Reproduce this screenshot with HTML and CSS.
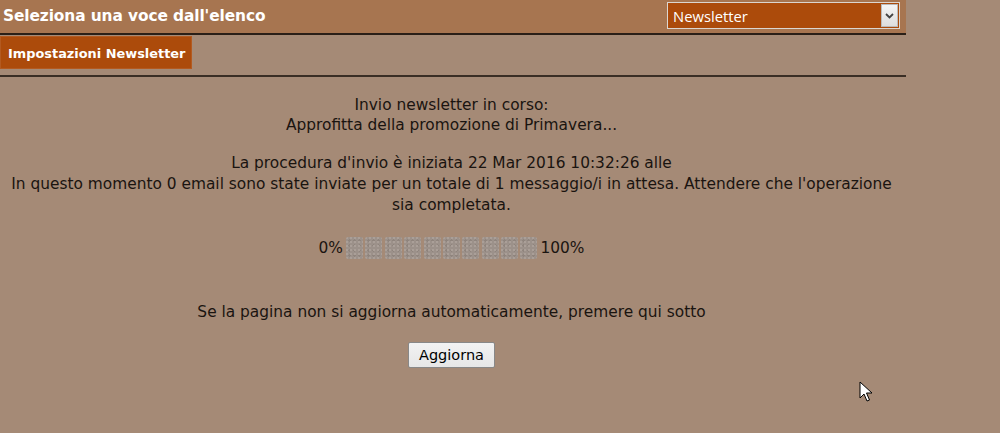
FILE: index.html
```
<!DOCTYPE html>
<html>
<head>
<meta charset="utf-8">
<link rel="stylesheet" href="styles.css">
</head>
<body>
<div class="page">
  <div class="header">
    <span class="title">Seleziona una voce dall'elenco</span>
    <div class="select">
      <span class="select-text">Newsletter</span>
      <span class="select-btn"><svg width="9" height="6" viewBox="0 0 9 6"><path d="M1 1 L4.5 4.5 L8 1" fill="none" stroke="#444" stroke-width="1.8"/></svg></span>
    </div>
  </div>
  <div class="tabs">
    <span class="tab">Impostazioni Newsletter</span>
  </div>
  <div class="content">
    <p class="block">Invio newsletter in corso:<br>Approfitta della promozione di Primavera...</p>
    <p class="block block2">La procedura d'invio è iniziata 22 Mar 2016 10:32:26 alle<br>In questo momento 0 email sono state inviate per un totale di 1 messaggio/i in attesa. Attendere che l'operazione sia completata.</p>
    <div class="progress">
      <span>0%</span>
      <span class="bars">
        <i></i><i></i><i></i><i></i><i></i><i></i><i></i><i></i><i></i><i></i>
      </span>
      <span>100%</span>
    </div>
    <p class="note">Se la pagina non si aggiorna automaticamente, premere qui sotto</p>
    <button class="btn">Aggiorna</button>
  </div>
</div>
<svg class="cursor" width="14" height="22" viewBox="0 0 14 22"><path d="M1 1 L1 17 L5 13 L8 20 L10.5 19 L7.5 12 L13 12 Z" fill="#fff" stroke="#000" stroke-width="1" stroke-linejoin="round"/></svg>
</body>
</html>
```
FILE: styles.css
```
html, body {
  margin: 0;
  padding: 0;
  background: #a58a76;
  font-family: "DejaVu Sans", Verdana, sans-serif;
  font-size: 15.4px;
  color: #1a1410;
}
.page {
  width: 906px;
}
.header {
  background: #a77550;
  border-bottom: 2px solid #2a1f17;
  display: flex;
  align-items: center;
  justify-content: space-between;
  box-sizing: border-box;
  height: 35px;
  padding: 0 6px 0 3px;
}
.title {
  color: #fff;
  font-weight: bold;
  font-size: 15.4px;
  letter-spacing: -0.1px;
  margin-top: -2px;
}
.select {
  width: 233px;
  height: 27px;
  box-sizing: border-box;
  border: 1px solid #dcd6d0;
  background: #ac4b0b;
  display: flex;
  align-items: center;
  margin-top: -2px;
}
.select-text {
  flex: 1;
  color: #fff;
  font-family: "Open Sans", sans-serif;
  font-size: 14.8px;
  padding-left: 5px;
}
.select-btn {
  width: 17px;
  height: 23px;
  margin-right: 1px;
  background: linear-gradient(#f4f4f4, #dedede);
  border: 1px solid #bbb;
  box-sizing: border-box;
  display: flex;
  align-items: center;
  justify-content: center;
}
.tabs {
  padding-top: 1px;
  border-bottom: 2px solid #3a2e25;
  box-sizing: border-box;
  height: 42px;
}
.tab {
  display: inline-block;
  background: #ac4b0b;
  color: #fff;
  font-weight: bold;
  font-size: 12.9px;
  height: 33px;
  line-height: 33px;
  padding: 0 0 0 7px;
  width: 192px;
  box-sizing: border-box;
  border: 1px solid #b35a20;
}
.content {
  width: 903px;
  text-align: center;
  padding-top: 18px;
}
.block {
  margin: 0 0 18px 0;
  line-height: 20px;
}
.block2 {
  margin: 0 0 20px 0;
  line-height: 21px;
}
.progress {
  display: flex;
  justify-content: center;
  align-items: center;
  gap: 3px;
  height: 24px;
}
.bars {
  display: inline-flex;
  gap: 2.4px;
}
.bars i {
  display: block;
  width: 17px;
  height: 22px;
  border-radius: 2px;
  background-color: #9c918a;
  background-image:
    radial-gradient(circle at 30% 30%, #aa9f98 0 1px, transparent 1.2px),
    radial-gradient(circle at 70% 70%, #8f847d 0 1px, transparent 1.2px);
  background-size: 4px 4px, 5px 5px;
}
.note {
  margin: 42px 0 0 0;
  line-height: 20px;
}
.btn {
  margin-top: 20px;
  width: 87px;
  height: 26px;
  font-family: "DejaVu Sans", sans-serif;
  font-size: 14.5px;
  color: #000;
  background: linear-gradient(#f2f2f2, #e6e6e6);
  border: 1px solid #888;
  border-radius: 2px;
  padding: 0;
}
.cursor {
  position: absolute;
  left: 859px;
  top: 381px;
}
```
